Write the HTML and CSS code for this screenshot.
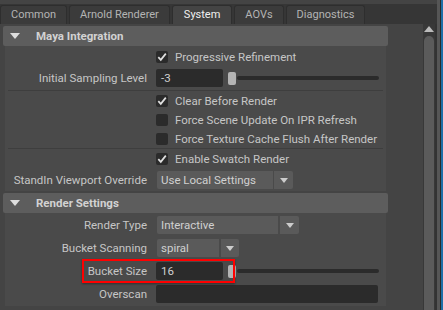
FILE: index.html
```html
<!DOCTYPE html>
<html lang="en">
<head>
    <meta charset="UTF-8">
    <title>Render Settings - System</title>
    <link rel="stylesheet" href="styles.css">
</head>
<body>
<div class="window">
    <div class="panel">
        <div class="tabs">
            <div class="tab">Common</div>
            <div class="tab">Arnold Renderer</div>
            <div class="tab active">System</div>
            <div class="tab">AOVs</div>
            <div class="tab">Diagnostics</div>
        </div>
        <div class="main">
            <div class="content">
                <div class="section-header"><span class="caret"></span>Maya Integration</div>
                <div class="frame frame-maya">
                    <div class="row">
                        <span class="label"></span>
                        <span class="checkbox checked"><svg width="12" height="12" viewBox="0 0 12 12"><path d="M2.3 6.2 L4.8 8.9 L9.8 2.6" fill="none" stroke="#e0e0e0" stroke-width="1.7"/></svg></span>
                        <span class="check-text">Progressive Refinement</span>
                    </div>
                    <div class="row spaced">
                        <span class="label">Initial Sampling Level</span>
                        <span class="field">-3</span>
                        <span class="slider"><span class="handle"></span><span class="track"></span></span>
                    </div>
                    <div class="sep"></div>
                    <div class="row">
                        <span class="label"></span>
                        <span class="checkbox checked"><svg width="12" height="12" viewBox="0 0 12 12"><path d="M2.3 6.2 L4.8 8.9 L9.8 2.6" fill="none" stroke="#e0e0e0" stroke-width="1.7"/></svg></span>
                        <span class="check-text">Clear Before Render</span>
                    </div>
                    <div class="row tight">
                        <span class="label"></span>
                        <span class="checkbox"></span>
                        <span class="check-text">Force Scene Update On IPR Refresh</span>
                    </div>
                    <div class="row tight">
                        <span class="label"></span>
                        <span class="checkbox"></span>
                        <span class="check-text">Force Texture Cache Flush After Render</span>
                    </div>
                    <div class="sep sep-flush"></div>
                    <div class="row">
                        <span class="label"></span>
                        <span class="checkbox checked"><svg width="12" height="12" viewBox="0 0 12 12"><path d="M2.3 6.2 L4.8 8.9 L9.8 2.6" fill="none" stroke="#e0e0e0" stroke-width="1.7"/></svg></span>
                        <span class="check-text">Enable Swatch Render</span>
                    </div>
                    <div class="row spaced">
                        <span class="label">StandIn Viewport Override</span>
                        <span class="dropdown dd-standin"><span class="dd-text">Use Local Settings</span><span class="dd-arrow"></span></span>
                    </div>
                </div>

                <div class="section-header second"><span class="caret"></span>Render Settings</div>
                <div class="frame frame-render">
                    <div class="row">
                        <span class="label">Render Type</span>
                        <span class="dropdown dd-type"><span class="dd-text">Interactive</span><span class="dd-arrow"></span></span>
                    </div>
                    <div class="row">
                        <span class="label">Bucket Scanning</span>
                        <span class="dropdown dd-scan"><span class="dd-text">spiral</span><span class="dd-arrow"></span></span>
                    </div>
                    <div class="row marked">
                        <span class="label">Bucket Size</span>
                        <span class="field">16</span>
                        <span class="slider"><span class="handle"></span><span class="track"></span></span>
                        <span class="highlight"></span>
                    </div>
                    <div class="row">
                        <span class="label">Overscan</span>
                        <span class="field field-long"></span>
                    </div>
                </div>
            </div>
            <div class="scrollbar">
                <div class="scroll-up"></div>
                <div class="scroll-thumb"></div>
            </div>
        </div>
    </div>
    <div class="edge"><span class="edge-gray"></span><span class="edge-dark"></span><span class="edge-blue"></span></div>
</div>
</body>
</html>
```

FILE: styles.css
```css
body {
    margin: 0;
    background-color: #444444;
    color: #c6c6c6;
    font-family: Roboto, "Liberation Sans", sans-serif;
    font-size: 11.5px;
}
.window {
    display: flex;
    width: 443px;
    height: 310px;
    overflow: hidden;
}
.panel {
    width: 437px;
    display: flex;
    flex-direction: column;
}
.tabs {
    display: flex;
    align-items: flex-end;
    height: 20px;
    margin-top: 4px;
    background-color: #363636;
}
.tab {
    height: 19px;
    line-height: 18px;
    padding: 0 10px;
    margin-right: 2px;
    box-sizing: border-box;
    background-color: #3b3b3b;
    border: 1px solid #2e2e2e;
    border-bottom: none;
    border-radius: 3px 3px 0 0;
    font-size: 11px;
    color: #b4b4b4;
}
.tab.active {
    background-color: #444444;
    color: #f0f0f0;
    padding: 0 11px;
}
.main {
    flex: 1;
    display: flex;
}
.content {
    width: 423px;
}
.section-header {
    display: flex;
    align-items: center;
    width: 385px;
    height: 20px;
    margin: 2px 0 0 3px;
    background-color: #5d5d5d;
    border-radius: 2px;
    font-weight: bold;
    color: #d2d2d2;
}
.section-header.second {
    margin-top: 2px;
}
.caret {
    width: 0;
    height: 0;
    margin: 0 16px 0 7px;
    border-left: 5.5px solid transparent;
    border-right: 5.5px solid transparent;
    border-top: 6px solid #dddddd;
}
.frame {
    width: 381px;
    margin-left: 5px;
    background-color: #4a4a4a;
}
.frame-maya {
    padding: 2px 0;
}
.frame-render {
    padding: 3px 0 3px;
}
.row {
    display: flex;
    align-items: center;
    height: 18px;
}
.row.spaced {
    margin-top: 3px;
}
.row.tight {
    margin-top: 1px;
}
.frame-render .row + .row {
    margin-top: 5px;
}
.label {
    flex-shrink: 0;
    width: 142px;
    margin-right: 9px;
    text-align: right;
    white-space: nowrap;
}
.checkbox {
    display: flex;
    width: 12px;
    height: 12px;
    margin-right: 7px;
    background-color: #2b2b2b;
    border-radius: 2px;
}
.check-text {
    white-space: nowrap;
}
.field {
    width: 67px;
    height: 18px;
    line-height: 18px;
    padding-left: 5px;
    box-sizing: border-box;
    background-color: #2b2b2b;
    border-radius: 2px;
    color: #d0d0d0;
}
.field-long {
    flex: 1;
    margin-right: 8px;
}
.slider {
    flex: 1;
    display: flex;
    align-items: center;
    margin: 0 7px 0 5px;
}
.handle {
    width: 8px;
    height: 13px;
    background-color: #b4b4b4;
    border-radius: 2px;
}
.track {
    flex: 1;
    height: 4px;
    margin-left: 1px;
    background-color: #2b2b2b;
    border-radius: 2px;
}
.sep {
    height: 1px;
    margin: 3px 3px 1px;
    background-color: #3e3e3e;
}
.sep.sep-flush {
    margin-top: 0;
}
.dropdown {
    display: flex;
    gap: 1px;
    height: 18px;
    margin-left: 1px;
}
.dd-text {
    padding-left: 4px;
    line-height: 18px;
    background-color: #5a5a5a;
    border-radius: 2px 0 0 2px;
    white-space: nowrap;
    color: #d0d0d0;
}
.dd-arrow {
    display: flex;
    align-items: center;
    justify-content: center;
    width: 19px;
    background-color: #5a5a5a;
    border-radius: 0 2px 2px 0;
}
.dd-arrow::after {
    content: "";
    border-left: 4.5px solid transparent;
    border-right: 4.5px solid transparent;
    border-top: 5px solid #cccccc;
}
.dd-standin .dd-text {
    width: 112px;
}
.dd-type .dd-text {
    width: 117px;
}
.dd-type {
    gap: 2px;
}
.dd-scan .dd-text {
    width: 58px;
}
.dd-scan {
    gap: 2px;
}
.dd-scan .dd-arrow {
    width: 18px;
}
.row.marked {
    position: relative;
}
.highlight {
    position: absolute;
    left: 77px;
    top: -3px;
    width: 153px;
    height: 24px;
    box-sizing: border-box;
    border: 2px solid #ff0000;
    box-shadow: 0 1px 2px rgba(0, 0, 0, 0.35);
}
.scrollbar {
    width: 12px;
    display: flex;
    flex-direction: column;
    align-items: center;
    background-color: #383838;
    border-right: 2px solid #333333;
}
.scroll-up {
    width: 0;
    height: 0;
    margin-top: 2px;
    border-left: 5px solid transparent;
    border-right: 5px solid transparent;
    border-bottom: 6px solid #bbbbbb;
}
.scroll-thumb {
    flex: 1;
    width: 10px;
    margin-top: 4px;
    background-color: #5b5b5b;
    border-radius: 5px 5px 0 0;
}
.edge {
    display: flex;
    width: 6px;
}
.edge-gray {
    width: 3px;
    background-color: #565656;
}
.edge-dark {
    width: 1px;
    background-color: #2a2a2a;
}
.edge-blue {
    width: 2px;
    background-color: #1e6ea6;
}
```
